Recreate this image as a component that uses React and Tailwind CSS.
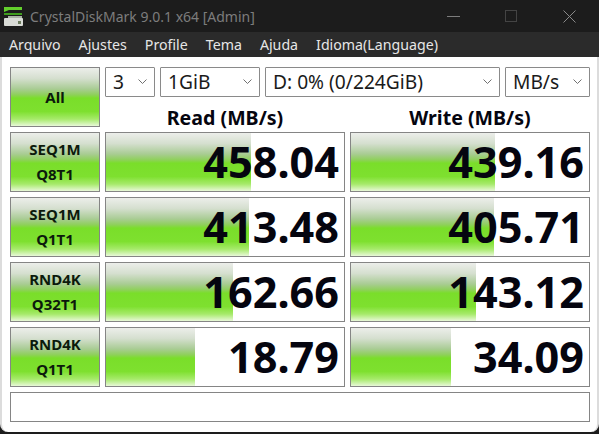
import React from 'react';

const rows = [
  { a: 'SEQ1M', b: 'Q8T1', read: '458.04', readBar: 145, write: '439.16', writeBar: 144 },
  { a: 'SEQ1M', b: 'Q1T1', read: '413.48', readBar: 143, write: '405.71', writeBar: 143 },
  { a: 'RND4K', b: 'Q32T1', read: '162.66', readBar: 127, write: '143.12', writeBar: 125 },
  { a: 'RND4K', b: 'Q1T1', read: '18.79', readBar: 89, write: '34.09', writeBar: 100 },
];

const green = 'bg-[linear-gradient(to_bottom,#eceeea_0%,#d5dfcf_18%,#a9cc94_36%,#8fd05c_46%,#7ade2a_52%,#7ee02f_75%,#a6ea6a_88%,#e8f8d8_100%)]';

function Select({ label, className }) {
  return (
    <div className={`h-[30px] flex items-center justify-between bg-white border border-[#8a8a8a] rounded-[1px] pl-[7px] pr-[7px] text-[19.2px] text-[#1a1a1a] ${className}`}>
      <span>{label}</span>
      <svg width="9" height="6" viewBox="0 0 9 6" fill="none" stroke="#707070" strokeWidth="1">
        <path d="M0.5 0.5L4.5 4.5L8.5 0.5" />
      </svg>
    </div>
  );
}

function Tile({ a, b }) {
  return (
    <div className={`w-[90px] h-[60px] shrink-0 border border-[#858585] flex flex-col items-center justify-center text-[15px] leading-[25px] font-bold text-[#0c1a0c] ${green}`}>
      <span>{a}</span>
      <span>{b}</span>
    </div>
  );
}

function Meter({ value, bar }) {
  return (
    <div className="relative w-[240px] h-[60px] bg-white border border-[#858585] flex items-center justify-end pr-[5px]">
      <div className={`absolute left-0 top-0 bottom-0 ${green}`} style={{ width: bar }} />
      <span className="relative text-[43.2px] leading-none font-bold text-[#05050f]">{value}</span>
    </div>
  );
}

export default function App() {
  return (
    <div className="w-[599px] h-[434px] bg-[#1d1d1d] overflow-hidden font-['Noto_Sans',sans-serif]">
      <div className="h-[32px] flex items-center bg-[#1c1c1c]">
        <svg width="20" height="20" viewBox="0 0 20 20" className="ml-[3px] shrink-0">
          <path d="M1 1H19V4H6L1 6Z" fill="#63d02c" />
          <path d="M1 7H19V9H1Z" fill="#3f9d1e" />
          <path d="M5 10H19V12H5Z" fill="#aab3a6" />
          <rect x="1" y="12" width="19" height="8" rx="1" fill="#d9dbd6" />
          <rect x="15" y="15" width="3" height="3" fill="#6b7a5c" />
        </svg>
        <span className="ml-[7px] text-[14px] text-[#7d7d7d]">CrystalDiskMark 9.0.1 x64 [Admin]</span>
        <div className="ml-auto flex items-center mr-[23px]">
          <div className="w-[13px] h-px bg-[#7c7c7c]" />
          <div className="ml-[45px] w-[12px] h-[12px] border border-[#444444]" />
          <svg width="13" height="13" viewBox="0 0 13 13" stroke="#8a8a8a" strokeWidth="1" className="ml-[46px]">
            <path d="M0.5 0.5L12.5 12.5M12.5 0.5L0.5 12.5" />
          </svg>
        </div>
      </div>
      <div className="h-[25px] flex items-center gap-[18px] pl-[9px] bg-[#2b2b2b] text-[14.2px] text-[#e6e6e6]">
        <span>Arquivo</span>
        <span>Ajustes</span>
        <span>Profile</span>
        <span>Tema</span>
        <span>Ajuda</span>
        <span>Idioma(Language)</span>
      </div>
      <div className="h-[375px] bg-white rounded-b-[8px] border-l-2 border-r-2 border-[#dcdcdc] pl-[8px] pt-[10px] flex flex-col gap-[5px]">
        <div className="flex gap-[5px] h-[60px]">
          <div className={`w-[90px] h-[60px] shrink-0 border border-[#858585] flex items-center justify-center text-[15px] font-bold text-[#0c1a0c] ${green}`}>All</div>
          <div className="flex flex-col">
            <div className="flex gap-[5px]">
              <Select label="3" className="w-[50px]" />
              <Select label="1GiB" className="w-[100px]" />
              <Select label="D: 0% (0/224GiB)" className="w-[235px]" />
              <Select label="MB/s" className="w-[85px]" />
            </div>
            <div className="flex gap-[5px] mt-[9px] text-[19.6px] leading-[24px] font-bold text-[#05050f] text-center">
              <div className="w-[240px]">Read (MB/s)</div>
              <div className="w-[240px]">Write (MB/s)</div>
            </div>
          </div>
        </div>
        {rows.map((r, i) => (
          <div key={i} className="flex gap-[5px]">
            <Tile a={r.a} b={r.b} />
            <Meter value={r.read} bar={r.readBar} />
            <Meter value={r.write} bar={r.writeBar} />
          </div>
        ))}
        <div className="w-[580px] h-[30px] border border-[#858585] bg-white" />
      </div>
    </div>
  );
}
